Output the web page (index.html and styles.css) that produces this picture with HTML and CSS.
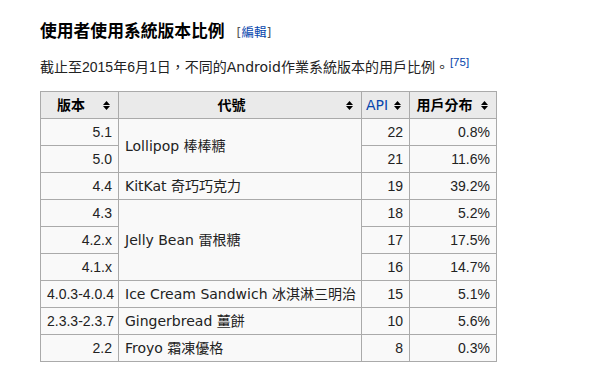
FILE: index.html
```html
<!DOCTYPE html>
<html lang="zh-Hant">
<head>
<meta charset="utf-8">
<link rel="stylesheet" href="styles.css">
</head>
<body>
<div class="page">
  <h3 class="title"><span class="headline">使用者使用系統版本比例</span><span class="edit"><span class="br">[</span><a class="edit-link">編輯</a><span class="br">]</span></span></h3>
  <p class="intro">截止至<span class="digits">2015</span>年<span class="digits">6</span>月<span class="digits">1</span>日，不同的Android作業系統版本的用戶比例。<sup class="ref">[75]</sup></p>
  <table class="stats">
    <colgroup>
      <col class="c1"><col class="c2"><col class="c3"><col class="c4">
    </colgroup>
    <thead>
      <tr>
        <th>版本<svg class="sort" viewBox="0 0 7 9" width="7" height="9"><polygon points="0,4 3.5,0 7,4"/><polygon points="0,5 7,5 3.5,9"/></svg></th>
        <th>代號<svg class="sort" viewBox="0 0 7 9" width="7" height="9"><polygon points="0,4 3.5,0 7,4"/><polygon points="0,5 7,5 3.5,9"/></svg></th>
        <th class="api"><a class="link">API</a><svg class="sort" viewBox="0 0 7 9" width="7" height="9"><polygon points="0,4 3.5,0 7,4"/><polygon points="0,5 7,5 3.5,9"/></svg></th>
        <th>用戶分布<svg class="sort" viewBox="0 0 7 9" width="7" height="9"><polygon points="0,4 3.5,0 7,4"/><polygon points="0,5 7,5 3.5,9"/></svg></th>
      </tr>
    </thead>
    <tbody>
      <tr><td class="num">5.1</td><td rowspan="2">Lollipop 棒棒糖</td><td class="num">22</td><td class="num">0.8%</td></tr>
      <tr><td class="num">5.0</td><td class="num">21</td><td class="num">11.6%</td></tr>
      <tr><td class="num">4.4</td><td>KitKat 奇巧巧克力</td><td class="num">19</td><td class="num">39.2%</td></tr>
      <tr><td class="num">4.3</td><td rowspan="3">Jelly Bean 雷根糖</td><td class="num">18</td><td class="num">5.2%</td></tr>
      <tr><td class="num">4.2.x</td><td class="num">17</td><td class="num">17.5%</td></tr>
      <tr><td class="num">4.1.x</td><td class="num">16</td><td class="num">14.7%</td></tr>
      <tr><td class="num">4.0.3-4.0.4</td><td>Ice Cream Sandwich 冰淇淋三明治</td><td class="num">15</td><td class="num">5.1%</td></tr>
      <tr><td class="num">2.3.3-2.3.7</td><td>Gingerbread 薑餅</td><td class="num">10</td><td class="num">5.6%</td></tr>
      <tr><td class="num">2.2</td><td>Froyo 霜凍優格</td><td class="num">8</td><td class="num">0.3%</td></tr>
    </tbody>
  </table>
</div>
</body>
</html>
```

FILE: styles.css
```css
html, body {
  margin: 0;
  padding: 0;
  background: #ffffff;
}

body {
  font-family: "DejaVu Sans", "Noto Sans CJK TC", sans-serif;
  color: #222222;
}

.page {
  padding: 21px 0 0 40px;
}

.title {
  margin: 0;
  font-size: 16.8px;
  line-height: 20px;
  font-weight: bold;
  color: #000000;
  display: flex;
  align-items: baseline;
  gap: 12px;
}

.edit {
  font-size: 12.5px;
  font-weight: normal;
}

.edit .br {
  color: #555555;
}

.edit-link {
  color: #0645ad;
}

.intro {
  margin: 14px 0 0 0;
  font-size: 14px;
  line-height: 20px;
  color: #222222;
}

.digits {
  font-family: "Liberation Sans", "Noto Sans CJK TC", sans-serif;
}

.ref {
  font-family: "Liberation Sans", sans-serif;
  font-size: 11.5px;
  line-height: 1;
  color: #0645ad;
  vertical-align: 6px;
  margin-left: 1px;
}

.stats {
  margin-top: 14px;
  width: 457px;
  border-collapse: collapse;
  table-layout: fixed;
  font-size: 14px;
  background: #f9f9f9;
  border: 1px solid #aaaaaa;
}

.c1 { width: 78px; }
.c2 { width: 243px; }
.c3 { width: 48px; }
.c4 { width: 87px; }

.stats th,
.stats td {
  border: 1px solid #aaaaaa;
  line-height: 20px;
  height: 20px;
  padding: 3px 6px;
}

.stats th {
  position: relative;
  background: #eaeaea;
  font-weight: bold;
  text-align: center;
  padding: 3px 21px 3px 4px;
  color: #000000;
}

.stats th.api {
  font-weight: normal;
}

.link {
  color: #0645ad;
}

.sort {
  position: absolute;
  right: 8px;
  top: 50%;
  margin-top: -4px;
  fill: #000000;
}

.stats td {
  color: #222222;
  white-space: nowrap;
  overflow: hidden;
}

.stats td.num {
  text-align: right;
  font-family: "Liberation Sans", "Noto Sans CJK TC", sans-serif;
}
```
